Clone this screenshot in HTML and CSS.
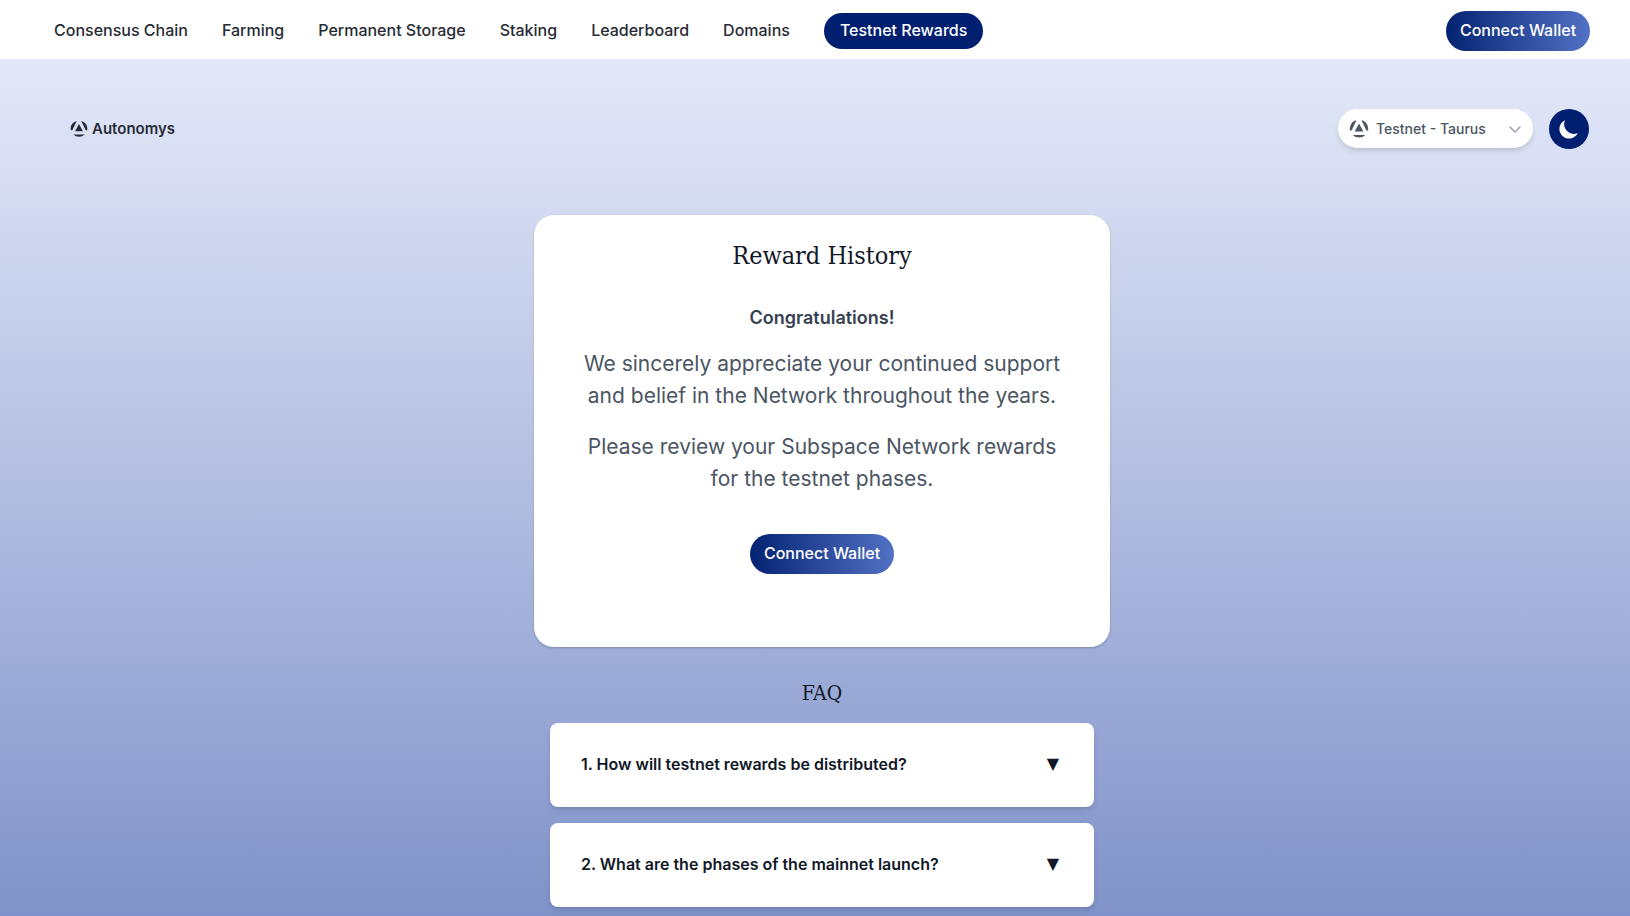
FILE: index.html
```html
<!DOCTYPE html>
<html lang="en">
<head>
<meta charset="utf-8">
<meta name="viewport" content="width=device-width, initial-scale=1">
<title>Reward History</title>
<link rel="stylesheet" href="styles.css">
</head>
<body>
<svg class="defs" width="0" height="0" aria-hidden="true">
  <symbol id="mark" viewBox="0 0 20 20">
    <path d="M10 4.500l4.400 8H5.600z"/>
    <path d="M7.500 1.200L2.600 11.500H1A9 9 0 0 1 6 1.600z"/>
    <path d="M12.500 1.200l4.900 10.300H19A9 9 0 0 0 14 1.600z"/>
    <path d="M3.600 16h12.800a9.200 9.200 0 0 1-12.800 0z"/>
  </symbol>
</svg>
<header class="topbar">
  <nav class="nav">
    <a class="nav-link" href="#">Consensus Chain</a>
    <a class="nav-link" href="#">Farming</a>
    <a class="nav-link" href="#">Permanent Storage</a>
    <a class="nav-link" href="#">Staking</a>
    <a class="nav-link" href="#">Leaderboard</a>
    <a class="nav-link" href="#">Domains</a>
    <a class="nav-link active" href="#">Testnet Rewards</a>
  </nav>
  <button class="wallet" type="button">Connect Wallet</button>
</header>
<div class="subbar">
  <a class="brand" href="#"><svg class="brand-mark" aria-hidden="true"><use href="#mark"/></svg>Autonomys</a>
  <div class="tools">
    <div class="network">
      <svg class="network-mark" aria-hidden="true"><use href="#mark"/></svg>
      <select class="network-select" aria-label="Network"><option>Testnet - Taurus</option></select>
      <svg class="chevron" viewBox="0 0 20 20" aria-hidden="true"><path d="M5 8l5 5 5-5"/></svg>
    </div>
    <button class="theme" type="button" aria-label="Dark mode">
      <svg class="moon" viewBox="0 0 20 20" aria-hidden="true"><path d="M17.293 13.293A8 8 0 0 1 6.707 2.707a8.001 8.001 0 1 0 10.586 10.586z"/></svg>
    </button>
  </div>
</div>
<main class="main">
  <section class="card">
    <h1 class="title">Reward History</h1>
    <h2 class="congrats">Congratulations!</h2>
    <p class="copy">We sincerely appreciate your continued support and belief in the Network throughout the years.</p>
    <p class="copy">Please review your Subspace Network rewards for the testnet phases.</p>
    <button class="wallet card-wallet" type="button">Connect Wallet</button>
  </section>
  <section class="faq">
    <h2 class="faq-title">FAQ</h2>
    <button class="question" type="button" aria-expanded="false"><span>1. How will testnet rewards be distributed?</span><span class="arrow">▼</span></button>
    <button class="question" type="button" aria-expanded="false"><span>2. What are the phases of the mainnet launch?</span><span class="arrow">▼</span></button>
  </section>
</main>
</body>
</html>
```
FILE: styles.css
```css
* { box-sizing: border-box; }
body {
  margin: 0;
  min-height: 100vh;
  font-family: Inter, "Liberation Sans", sans-serif;
  font-size: 16px;
  line-height: 24px;
  color: #111827;
  background: linear-gradient(#e4e9f9 59px, #8092c9) no-repeat;
}
button, select { font: inherit; color: inherit; border: 0; cursor: pointer; }
a { color: inherit; text-decoration: none; }
h1, h2, p { margin: 0; }
.defs { position: absolute; }

.topbar {
  display: flex;
  align-items: center;
  justify-content: space-between;
  padding: 11px 40px 8px 54px;
  background: #fff;
}
.nav { display: flex; gap: 34px; }
.nav-link {
  padding: 5px 0 7px;
  font-weight: 500;
  color: #282b35;
  white-space: nowrap;
}
.nav-link.active {
  padding: 5px 16px 7px;
  border-radius: 18px;
  background: #001f70;
  color: #fff;
}
.wallet {
  width: 144px;
  height: 40px;
  padding: 0 0 2px;
  border-radius: 20px;
  font-weight: 500;
  color: #fff;
  background: linear-gradient(to right, #032372, #5271c4);
}

.subbar {
  display: flex;
  align-items: center;
  justify-content: space-between;
  padding: 50px 41px 0 70px;
}
.brand {
  display: flex;
  align-items: center;
  gap: 4px;
  font-size: 15px;
  font-weight: 600;
  color: #282b35;
}
.brand-mark { width: 18px; height: 18px; fill: currentColor; }
.tools { display: flex; gap: 16px; }
.network { position: relative; height: 39px; color: #4b5563; }
.network-select {
  width: 195px;
  height: 39px;
  padding: 0 40px 0 38px;
  appearance: none;
  border-radius: 20px;
  background: #fff;
  box-shadow: 0 4px 6px -1px #0000001a, 0 2px 4px -2px #0000001a;
  font-size: 14px;
  font-weight: 500;
}
.network-mark { position: absolute; left: 11px; top: 10px; width: 20px; height: 20px; fill: currentColor; }
.chevron { position: absolute; right: 8px; top: 10px; width: 20px; height: 20px; fill: none; stroke: #9ca3af; stroke-width: 1.500; stroke-linecap: round; stroke-linejoin: round; }
.theme {
  display: grid;
  place-items: center;
  width: 40px;
  height: 40px;
  padding: 0;
  border-radius: 50%;
  background: #001f70;
}
.moon { width: 24px; height: 24px; fill: #fff; }

.main {
  display: flex;
  flex-direction: column;
  align-items: center;
  padding: 66px 0 9px 14px;
}
.card {
  display: flex;
  flex-direction: column;
  align-items: center;
  width: 100%;
  max-width: 576px;
  padding: 25px 40px 73px;
  border-radius: 20px;
  background: #fff;
  box-shadow: 0 1px 3px #0000001a, 0 1px 2px #0000001a;
  text-align: center;
}
.title { font: 400 25px/32px "DejaVu Serif Condensed", "DejaVu Serif", serif; }
.congrats { margin: 32px 0 16px; font-size: 18px; line-height: 28px; font-weight: 600; color: #374151; }
.copy { margin-bottom: 19px; font-size: 21px; line-height: 32px; color: #4b5563; }
.card-wallet { margin-top: 20px; }
.faq {
  display: flex;
  flex-direction: column;
  align-items: center;
  gap: 16px;
  width: 100%;
  max-width: 544px;
  padding-top: 32px;
}
.faq-title { font: 400 21px/28px "DejaVu Serif Condensed", "DejaVu Serif", serif; }
.question {
  display: flex;
  align-items: center;
  justify-content: space-between;
  width: 100%;
  padding: 29px 35px 31px 31px;
  border-radius: 8px;
  background: #fff;
  box-shadow: 0 4px 6px -1px #0000001a, 0 2px 4px -2px #0000001a;
  font-weight: 600;
  text-align: left;
}
.arrow { font-family: "DejaVu Sans", sans-serif; }
```
